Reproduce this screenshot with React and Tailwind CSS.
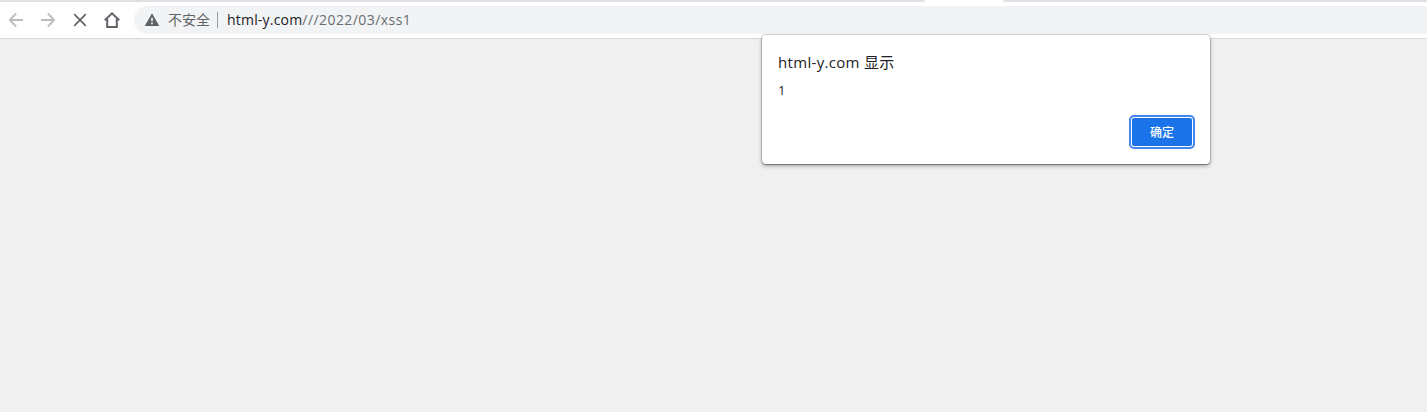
function TabStrip() {
  return (
    <div className="flex h-[2px] shrink-0 bg-white">
      <div className="w-[925px] rounded-br-[2px] bg-[#dee1e6]" />
      <div className="w-[78px]" />
      <div className="flex-1 rounded-bl-[2px] bg-[#dee1e6]" />
    </div>
  );
}

function Arrow({ flip }) {
  return (
    <svg viewBox="0 0 16 16" className={flip ? "size-4 -scale-x-100" : "size-4"} fill="none" stroke="#babcbe" strokeWidth="1.9">
      <path d="M15 8H2.6M8.2 1.4 1.9 8l6.3 6.6" />
    </svg>
  );
}

function Toolbar() {
  return (
    <div className="flex h-[37px] shrink-0 items-start border-b border-[#d8d8d8] bg-white pt-1">
      <div className="flex h-7 items-center gap-4 pl-2">
        <Arrow />
        <Arrow flip />
        <svg viewBox="0 0 16 16" className="size-4" fill="none" stroke="#5f6368" strokeWidth="1.7">
          <path d="M2.2 2.2l11.6 11.6M13.8 2.2L2.2 13.8" />
        </svg>
        <svg viewBox="0 0 16 16" className="size-4" fill="none" stroke="#5f6368" strokeWidth="2">
          <path d="M.8 8.3 8 1.4l7.2 6.9M3.2 7v7.9h9.6V7" />
        </svg>
      </div>
      <div className="ml-[14px] flex h-7 flex-1 items-center rounded-l-full bg-[#f1f3f4] pl-[10px] text-[14px] leading-7">
        <svg viewBox="0 0 16 16" className="size-4">
          <path d="M8 1.3 15.3 14H.7Z" fill="#5f6368" />
          <path d="M7.2 5.8h1.6v3.5H7.2zM7.2 10.6h1.6v1.6H7.2z" fill="#f1f3f4" />
        </svg>
        <span className="ml-2 w-[43px] whitespace-nowrap text-[#5f6368]">不安全</span>
        <span className="ml-[6px] h-4 w-px bg-[#9b9ea2]" />
        <span className="ml-[9px] whitespace-nowrap tracking-[0.2px] text-[#202124]">
          html-y.com<span className="tracking-[0.43px] text-[#6a6d71]">///2022/03/xss1</span>
        </span>
      </div>
    </div>
  );
}

function AlertDialog() {
  return (
    <div
      role="alertdialog"
      className="absolute left-[762px] top-[35px] flex h-[129px] w-[448px] flex-col rounded-[4px] bg-white px-4 pt-[17px] text-[#202124] shadow-[0_0_0_1px_rgba(0,0,0,0.15),0_1px_1px_0_rgba(0,0,0,0.25),0_2px_4px_0_rgba(0,0,0,0.3)]"
    >
      <h1 className="h-5 whitespace-nowrap text-[15px] leading-5">
        <span className="tracking-[0.32px]">html-y.com </span>
        <span className="tracking-[0.3px]">显示</span>
      </h1>
      <p className="mt-2 h-5 text-[13px] leading-5">1</p>
      <button className="mr-[2px] mt-[18px] h-7 w-[60px] self-end rounded-[2px] bg-[#1a73e8] pt-px text-[12px] font-medium leading-7 text-white shadow-[0_0_0_1px_#ffffff,0_0_0_3px_#4285f4]">
        确定
      </button>
    </div>
  );
}

export default function App() {
  return (
    <div className="relative flex h-[412px] w-full flex-col overflow-hidden bg-[#f0f0f0] font-['Open_Sans','Noto_Sans_CJK_SC',sans-serif]">
      <TabStrip />
      <Toolbar />
      <main className="flex-1" />
      <AlertDialog />
    </div>
  );
}
